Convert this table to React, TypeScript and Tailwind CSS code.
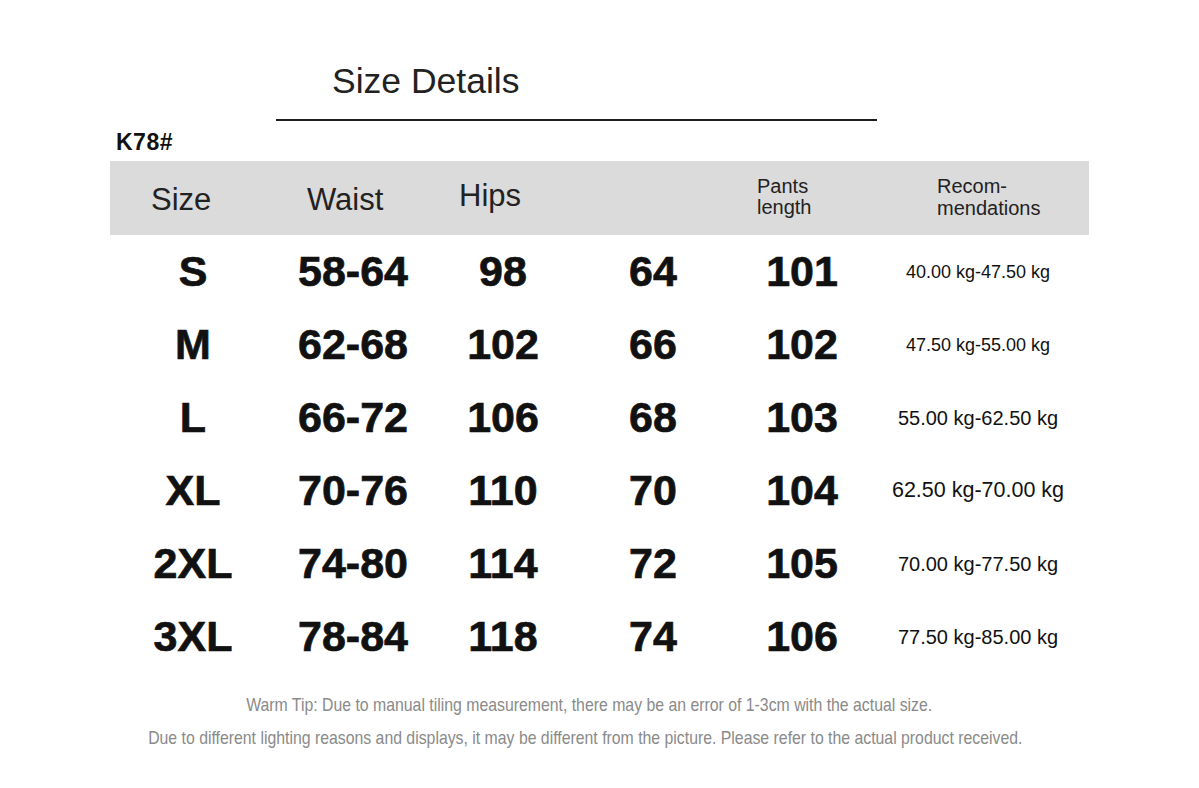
import React from 'react';

interface SizeRow {
  size: string;
  waist: string;
  hips: string;
  thigh: string;
  length: string;
  weight: string;
  weightSize: string;
}

const rows: SizeRow[] = [
  { size: 'S', waist: '58-64', hips: '98', thigh: '64', length: '101', weight: '40.00 kg-47.50 kg', weightSize: 'text-[18px]' },
  { size: 'M', waist: '62-68', hips: '102', thigh: '66', length: '102', weight: '47.50 kg-55.00 kg', weightSize: 'text-[18px]' },
  { size: 'L', waist: '66-72', hips: '106', thigh: '68', length: '103', weight: '55.00 kg-62.50 kg', weightSize: 'text-[20px]' },
  { size: 'XL', waist: '70-76', hips: '110', thigh: '70', length: '104', weight: '62.50 kg-70.00 kg', weightSize: 'text-[21.5px]' },
  { size: '2XL', waist: '74-80', hips: '114', thigh: '72', length: '105', weight: '70.00 kg-77.50 kg', weightSize: 'text-[20px]' },
  { size: '3XL', waist: '78-84', hips: '118', thigh: '74', length: '106', weight: '77.50 kg-85.00 kg', weightSize: 'text-[20px]' },
];

const cols = 'grid grid-cols-[166px_154px_146px_154px_144px_1fr]';
const big = 'text-[43px] font-bold leading-none [-webkit-text-stroke:0.7px_#111]';

export default function App() {
  return (
    <div className="min-h-[788px] w-[1199px] bg-white font-['Liberation_Sans',Arial,sans-serif] text-[#1a1a1a]">
      {/* title */}
      <div className="ml-[276px] w-[601px] border-b-2 border-[#1e1e1e] pb-[18px] pt-[61px] pl-[56px]">
        <h1 className="text-[35.5px] leading-[40px] text-[#222]">Size Details</h1>
      </div>

      <div className="ml-[116px] mt-[8px] text-[23px] font-bold leading-[26px] tracking-[0.5px] text-[#111]">K78#</div>

      <div className="mx-[110px] mt-[6px]">
        {/* header band */}
        <div className="grid h-[74px] grid-cols-[156px_152px_298px_180px_1fr] items-center bg-[#dbdbdb] pl-[41px] text-[#222]">
          <span className="mt-[2px] text-[31px] leading-none">Size</span>
          <span className="mt-[2px] text-[31px] leading-none">Waist</span>
          <span className="-mt-[6px] text-[31px] leading-none">Hips</span>
          <span className="-mt-[3px] text-[20px] leading-[21px]">
            Pants
            <br />
            length
          </span>
          <span className="-mt-[3px] text-[20px] leading-[22px]">
            Recom-
            <br />
            mendations
          </span>
        </div>

        {/* rows */}
        {rows.map((row) => (
          <div key={row.size} className={`${cols} h-[73px] items-center text-center text-[#111]`}>
            <span className={big}>{row.size}</span>
            <span className={big}>{row.waist}</span>
            <span className={big}>{row.hips}</span>
            <span className={big}>{row.thigh}</span>
            <span className={big}>{row.length}</span>
            <span className={`pr-[7px] leading-none ${row.weightSize}`}>{row.weight}</span>
          </div>
        ))}
      </div>

      {/* footer notes */}
      <div className="mt-[22px] flex flex-col items-center text-[#8a8a8a]">
        <p className="ml-[-20px] scale-x-[0.855] whitespace-nowrap text-[18.5px] leading-[20px]">
          Warm Tip: Due to manual tiling measurement, there may be an error of 1-3cm with the actual size.
        </p>
        <p className="ml-[-28px] mt-[13px] scale-x-[0.855] whitespace-nowrap text-[18.5px] leading-[20px]">
          Due to different lighting reasons and displays, it may be different from the picture. Please refer to the actual product received.
        </p>
      </div>
    </div>
  );
}
